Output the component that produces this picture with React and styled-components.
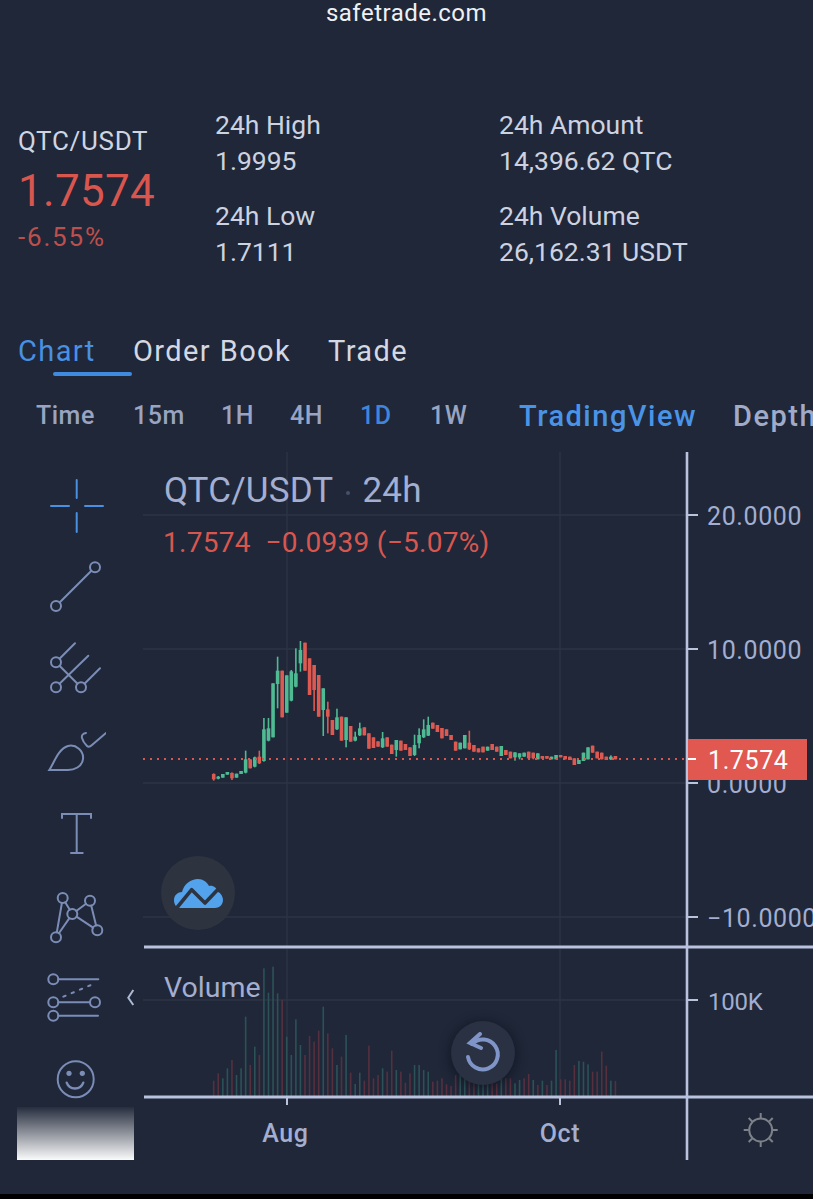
import React from "react"
import styled, { createGlobalStyle } from "styled-components"

const GlobalStyle = createGlobalStyle`
	html, body {
		margin: 0;
		padding: 0;
		background: #1f2738;
	}
	body {
		font-family: Roboto, "Liberation Sans", sans-serif;
	}
`

const Page = styled.div`
	width: 813px;
	height: 1199px;
	background: #1f2738;
	overflow: hidden;
	display: flex;
	flex-direction: column;
`

const TopBar = styled.div`
	height: 30px;
	flex: none;
	padding-bottom: 4px;
	box-sizing: border-box;
	display: flex;
	align-items: center;
	justify-content: center;
	color: #eef0f4;
	font-size: 24px;
	letter-spacing: 0.5px;
`

const Header = styled.div`
	height: 300px;
	flex: none;
	box-sizing: border-box;
	padding: 77px 0 0 18px;
	display: grid;
	grid-template-columns: 197px 284px 1fr;
`

const Pair = styled.div`
	padding-top: 18px;
	display: flex;
	flex-direction: column;
`

const PairName = styled.div`
	font-size: 26px;
	line-height: 32px;
	letter-spacing: 0.7px;
	color: #d0d5e1;
`

const LastPrice = styled.div`
	font-size: 44px;
	line-height: 50px;
	letter-spacing: 0.3px;
	margin-top: 9px;
	color: #d9564f;
`

const Change = styled.div`
	font-size: 26px;
	line-height: 32px;
	letter-spacing: 1.8px;
	margin-top: 5px;
	color: #bd4f4c;
`

const StatColumn = styled.div`
	display: flex;
	flex-direction: column;
	gap: 19px;
`

const Stat = styled.div`
	font-size: 26.5px;
	line-height: 36px;
	color: #ccd2e0;
	white-space: nowrap;
`

const Tabs = styled.div`
	height: 42px;
	flex: none;
	display: flex;
	align-items: center;
	padding-left: 18px;
`

const Tab = styled.div`
	width: ${(p) => p.$w}px;
	flex: none;
	font-size: 29px;
	letter-spacing: 1.4px;
	color: ${(p) => (p.$active ? "#4a90e2" : "#d3d8e3")};
	white-space: nowrap;
`

const TabLine = styled.div`
	width: 79px;
	height: 4px;
	flex: none;
	margin-left: 53px;
	background: #3f8be0;
	border-radius: 2px;
`

const Periods = styled.div`
	height: 76px;
	flex: none;
	box-sizing: border-box;
	padding: 3px 0 0 36px;
	display: flex;
	align-items: center;
	white-space: nowrap;
`

const Period = styled.div`
	width: ${(p) => p.$w}px;
	flex: none;
	font-size: 25px;
	font-weight: 500;
	letter-spacing: 0.5px;
	color: ${(p) => (p.$active ? "#3f86d8" : "#99a4c2")};
`

const ViewTab = styled.div`
	width: ${(p) => p.$w}px;
	flex: none;
	font-size: 29px;
	font-weight: 500;
	letter-spacing: 1.5px;
	color: ${(p) => (p.$active ? "#4a94e8" : "#a0abc9")};
`

const Workspace = styled.div`
	height: 708px;
	flex: none;
	display: flex;
`

const Toolbar = styled.div`
	position: relative;
	width: 143px;
	flex: none;
	box-sizing: border-box;
	padding-top: 12px;
	display: flex;
	flex-direction: column;
`

const ToolSlot = styled.div`
	height: 82px;
	flex: none;
	padding-left: 46px;
	display: flex;
	align-items: center;
`

const ToolIcon = styled.svg`
	width: 60px;
	height: 60px;
	fill: none;
	stroke: ${(p) => (p.$active ? "#4a90e2" : "#7b8db6")};
	stroke-width: 2;
	stroke-linecap: round;
`

const Collapse = styled.svg`
	position: absolute;
	left: 126px;
	top: 537px;
	width: 10px;
	height: 18px;
	fill: none;
	stroke: #aeb9d6;
	stroke-width: 2;
`

const Fade = styled.div`
	position: absolute;
	left: 17px;
	top: 655px;
	width: 117px;
	height: 53px;
	background: linear-gradient(to bottom, rgba(255, 255, 255, 0.03), rgba(255, 255, 255, 0.98));
`

const ChartPane = styled.div`
	position: relative;
	width: 670px;
	flex: none;
`

const ChartSvg = styled.svg`
	display: block;
	width: 670px;
	height: 708px;
`

const AxisText = styled.text`
	font-family: Roboto, "Liberation Sans", sans-serif;
	font-size: ${(p) => p.$size || 25}px;
	font-weight: ${(p) => p.$weight || 400};
	fill: ${(p) => p.$fill || "#a3aed0"};
	letter-spacing: ${(p) => p.$spacing || 0.6}px;
`

const Legend = styled.div`
	position: absolute;
	left: 21px;
	top: 19px;
	display: flex;
	align-items: center;
	font-size: 35px;
	line-height: 40px;
	letter-spacing: 0.2px;
	color: #a3aed0;
	white-space: nowrap;
`

const LegendDot = styled.span`
	width: 4px;
	height: 4px;
	margin: 4px 12px 0 13px;
	border-radius: 50%;
	background: #465069;
`

const LegendValues = styled.div`
	position: absolute;
	left: 20px;
	top: 75px;
	font-size: 28px;
	line-height: 32px;
	letter-spacing: 0.3px;
	color: #d9564f;
	white-space: pre;
`

const VolumeLabel = styled.div`
	position: absolute;
	left: 21px;
	top: 519px;
	font-size: 28.5px;
	line-height: 34px;
	color: #a3aed0;
`

const RoundButton = styled.div`
	position: absolute;
	left: ${(p) => p.$x}px;
	top: ${(p) => p.$y}px;
	width: ${(p) => p.$size}px;
	height: ${(p) => p.$size}px;
	border-radius: 50%;
	background: ${(p) => p.$bg};
	box-shadow: ${(p) => p.$shadow || "none"};
	display: flex;
	align-items: center;
	justify-content: center;
`

const BottomStrip = styled.div`
	flex: 1;
	margin-top: 34px;
	background: #000;
`

const GREEN = "#4fbb93"
const RED = "#dc5a52"

// [bodyTop, bodyBottom, wickTop, wickBottom, up], read off the 3x crops
const FIRST = [
	[432, 448, 430, 452, 0], [440, 446, 438, 448, 1], [432, 443, 432, 443, 1], [426, 434, 426, 434, 1],
	[429, 445, 427, 450, 0], [431, 443, 431, 443, 1], [423, 432, 423, 432, 1], [388, 428, 362, 430, 1],
	[388, 415, 388, 415, 0], [382, 410, 380, 412, 1], [380, 400, 362, 402, 0], [298, 393, 264, 395, 1],
	[295, 332, 264, 334, 1], [160, 322, 160, 322, 1], [122, 162, 80, 235, 1], [122, 262, 122, 262, 0],
	[136, 248, 136, 248, 1], [124, 212, 120, 214, 1], [130, 170, 55, 172, 1], [60, 100, 33, 125, 1],
	[38, 122, 38, 122, 0], [85, 195, 85, 195, 0], [105, 180, 105, 243, 0], [135, 260, 135, 260, 0],
	[175, 240, 175, 318, 1], [238, 260, 215, 310, 0], [270, 315, 270, 315, 0], [262, 298, 236, 300, 1],
	[260, 332, 260, 332, 0], [262, 330, 262, 352, 1], [288, 335, 288, 335, 0], [320, 332, 305, 334, 1],
	[295, 316, 278, 318, 1], [292, 316, 292, 316, 0], [310, 356, 310, 356, 0], [322, 354, 322, 354, 0],
	[334, 350, 334, 350, 0], [325, 352, 306, 354, 1], [322, 350, 322, 350, 0], [344, 372, 344, 372, 0],
	[330, 360, 330, 380, 1], [332, 362, 332, 362, 0], [342, 360, 342, 360, 0], [352, 378, 352, 378, 0],
	[345, 375, 314, 378, 1], [315, 340, 295, 355, 1], [298, 322, 268, 324, 1], [285, 317, 260, 318, 1],
	[278, 296, 278, 296, 0], [285, 306, 285, 306, 0], [294, 325, 294, 325, 0],
]

const SECOND = [
	[88, 108, 88, 108, 0], [105, 120, 105, 120, 0], [125, 152, 125, 152, 0], [128, 148, 128, 148, 1],
	[105, 145, 105, 145, 1], [128, 148, 92, 150, 0], [135, 155, 135, 155, 0], [145, 157, 145, 157, 0],
	[140, 157, 140, 157, 0], [140, 152, 140, 152, 1], [132, 150, 132, 150, 0], [140, 155, 140, 155, 0],
	[138, 168, 138, 168, 1], [150, 165, 150, 165, 0], [155, 175, 155, 175, 0], [157, 172, 157, 182, 1],
	[160, 172, 160, 178, 1], [158, 170, 158, 170, 1], [155, 175, 155, 178, 0], [158, 175, 158, 178, 0],
	[160, 178, 160, 178, 1], [168, 176, 168, 176, 0], [168, 176, 168, 176, 0], [170, 178, 170, 178, 1],
	[165, 178, 165, 178, 1], [165, 172, 165, 172, 0], [168, 178, 168, 178, 0], [170, 180, 170, 180, 0],
	[175, 195, 175, 195, 0], [180, 192, 180, 192, 1], [158, 183, 158, 183, 1], [142, 178, 142, 178, 1],
	[137, 158, 137, 158, 0], [155, 175, 155, 175, 0], [158, 178, 158, 178, 0], [170, 180, 170, 180, 0],
	[170, 178, 166, 180, 1], [168, 178, 168, 178, 0],
]

const toY = (list, offset) => list.map((c) => [...c.slice(0, 4).map((v) => v / 3 + offset), c[4]])
const CANDLES = [...toY(FIRST, 630), ...toY(SECOND, 700)]

// bar tops in the volume crop, green when the sign is positive
const VOLUMES = [
	-392, -370, 385, 355, -330, 375, 355, 200, -345, 290, -315, 55, 128, 50, 130, -150, 260, 315, 208, 285, -315, -258,
	-275, -242, 170, -250, -295, 345, -320, 255, -368, 402, 368, -392, -287, -385, -375, 355, -365, -302, 360, -365,
	-398, -370, 345, 345, 360, 365, -395, -392, -385, -403, -408, -375, 375, 365, -375, -385, 395, 400, 395, -375, -400,
	325, -385, -385, 400, 390, -385, -372, 390, -405, 392, -405, 392, 300, -388, -388, -392, -345, 333, 335, 343, -365,
	-365, -305, -347, 392, -393,
]

const candleX = (i) => 213.7 + i * 4.565

const Crosshair = () => (
	<ToolIcon $active viewBox="0 0 60 60">
		<path d="M30.7 5V23M30.7 38V57M5 31H23M39 31H57" />
	</ToolIcon>
)

const TrendLine = () => (
	<ToolIcon viewBox="0 0 60 60">
		<circle cx="49" cy="10.3" r="5" />
		<circle cx="10" cy="49" r="5" />
		<path d="M13.6 45.5L45.4 13.8" />
	</ToolIcon>
)

const Pitchfork = () => (
	<ToolIcon viewBox="0 0 60 60">
		<circle cx="10" cy="23.3" r="5" />
		<circle cx="10" cy="48.3" r="5" />
		<circle cx="35" cy="48.3" r="5" />
		<path d="M13.5 19.8L29 4.3M13.5 44.8L42.3 16.7M38.5 44.8L54 29.3M13.5 26.8L31.5 44.8" />
	</ToolIcon>
)

const Brush = () => (
	<ToolIcon viewBox="0 0 60 60">
		<path d="M3.3 49C8 42 12 28 22 25C30 23 38 30 37 38C36 46 28 49 22 49Z" />
		<path d="M40 12Q35 13 36 17Q37 21 41 25Q43 27 46 24L60 12" />
	</ToolIcon>
)

const TextTool = () => (
	<ToolIcon viewBox="0 0 60 60">
		<path d="M16 15V11H45V15M30.7 11V50M25 50H36.7" />
	</ToolIcon>
)

const Nodes = () => (
	<ToolIcon viewBox="0 0 60 60">
		<circle cx="16.7" cy="13" r="5" />
		<circle cx="44" cy="15.7" r="5" />
		<circle cx="26.3" cy="29" r="5" />
		<circle cx="51.3" cy="45.3" r="5" />
		<circle cx="10" cy="52.3" r="5" />
		<path d="M15.9 18L10.8 47.3M19.2 17.3L23.8 24.7M45.2 20.6L50.1 40.4M40 18.7L30.3 26M30.5 31.7L47.1 42.6M23.4 33.1L12.9 48.2" />
	</ToolIcon>
)

const Levels = () => (
	<ToolIcon viewBox="0 0 60 60">
		<circle cx="7.3" cy="12.3" r="5" />
		<circle cx="7.3" cy="35.3" r="5" />
		<circle cx="49" cy="35.3" r="5" />
		<circle cx="7.3" cy="48.7" r="5" />
		<path d="M12.3 12.3H52.3M12.3 35.3H44M12.3 48.7H52" />
		<path d="M17.3 29.7L49 16.3" strokeDasharray="2.5 6.5" />
	</ToolIcon>
)

const Smiley = () => (
	<ToolIcon viewBox="0 0 60 60">
		<circle cx="29.7" cy="30.3" r="18" />
		<circle cx="23" cy="24.3" r="2.6" fill="#7b8db6" stroke="none" />
		<circle cx="36.3" cy="24.3" r="2.6" fill="#7b8db6" stroke="none" />
		<path d="M20.7 33.7C22 37.5 25.5 39.5 29 39.5C32.5 39.5 36 37.5 37.3 33.7" strokeWidth="2.4" />
	</ToolIcon>
)

const TOOLS = [Crosshair, TrendLine, Pitchfork, Brush, TextTool, Nodes, Levels, Smiley]

const SunRays = () => {
	const rays = []
	for (let i = 0; i < 8; i++) {
		const a = (i * Math.PI) / 4
		rays.push(
			<line
				key={i}
				x1={760.7 + Math.cos(a) * 12}
				y1={1130 + Math.sin(a) * 12}
				x2={760.7 + Math.cos(a) * 17}
				y2={1130 + Math.sin(a) * 17}
			/>
		)
	}
	return (
		<g fill="none" stroke="#7d8189" strokeWidth="2">
			<circle cx="760.7" cy="1130" r="11.5" />
			{rays}
		</g>
	)
}

const Chart = () => (
	<ChartSvg viewBox="143 452 670 708">
		{/* grid */}
		<g stroke="#2c3446" strokeWidth="1.4">
			{[515, 649, 783, 917].map((y) => (
				<line key={y} x1="143" x2="687" y1={y} y2={y} />
			))}
			<line x1="143" x2="687" y1="1000" y2="1000" />
			<line x1="287" x2="287" y1="452" y2="946" />
			<line x1="560" x2="560" y1="452" y2="946" />
			<line x1="287" x2="287" y1="949" y2="1096" />
			<line x1="560" x2="560" y1="949" y2="1096" />
		</g>

		{/* candles */}
		{CANDLES.map(([top, bottom, wickTop, wickBottom, up], i) => {
			const x = candleX(i)
			const color = up ? GREEN : RED
			return (
				<g key={i} fill={color}>
					<rect x={x - 0.8} y={wickTop} width="1.6" height={wickBottom - wickTop} />
					<rect x={x - 1.8} y={top} width="3.6" height={Math.max(bottom - top, 2)} />
				</g>
			)
		})}

		{/* last price line */}
		<line x1="143" x2="687" y1="759" y2="759" stroke="#d9564f" strokeWidth="2" strokeDasharray="2 5" />

		{/* volume */}
		{VOLUMES.map((v, i) => {
			const top = Math.abs(v) / 3 + 950
			return (
				<rect
					key={i}
					x={candleX(i) - 0.8}
					y={top}
					width="1.6"
					height={1096 - top}
					fill={v > 0 ? "#2c5257" : "#56303f"}
				/>
			)
		})}

		{/* axes */}
		<g stroke="#b9c3de" fill="none">
			<line x1="687" x2="687" y1="452" y2="1160" strokeWidth="2.6" />
			<line x1="144" x2="813" y1="947" y2="947" strokeWidth="3" />
			<line x1="144" x2="813" y1="1097" y2="1097" strokeWidth="3" />
			<g strokeWidth="2">
				<line x1="688" x2="698" y1="515" y2="515" />
				<line x1="688" x2="698" y1="649" y2="649" />
				<line x1="688" x2="698" y1="783" y2="783" />
				<line x1="688" x2="698" y1="917" y2="917" />
				<line x1="688" x2="698" y1="1000" y2="1000" />
				<line x1="287" x2="287" y1="1098" y2="1105" />
				<line x1="560" x2="560" y1="1098" y2="1105" />
			</g>
		</g>

		<AxisText x="707" y="525">20.0000</AxisText>
		<AxisText x="707" y="659">10.0000</AxisText>
		<AxisText x="707" y="793">0.0000</AxisText>
		<AxisText x="707" y="927">−10.0000</AxisText>
		<AxisText x="708" y="1010" $size="24" $spacing="-0.2">100K</AxisText>
		<AxisText x="285.5" y="1142" textAnchor="middle" $size="25" $weight="500">Aug</AxisText>
		<AxisText x="560" y="1142" textAnchor="middle" $size="25" $weight="500">Oct</AxisText>

		{/* price tag */}
		<rect x="688" y="739" width="119" height="41" fill="#e0584f" />
		<line x1="688" x2="696" y1="759" y2="759" stroke="#fff" strokeWidth="2" />
		<AxisText x="708" y="769" $fill="#fff" $size="25">1.7574</AxisText>

		<SunRays />
	</ChartSvg>
)

export default function App() {
	return (
		<Page>
			<GlobalStyle />
			<TopBar>safetrade.com</TopBar>

			<Header>
				<Pair>
					<PairName>QTC/USDT</PairName>
					<LastPrice>1.7574</LastPrice>
					<Change>-6.55%</Change>
				</Pair>
				<StatColumn>
					<Stat>24h High<br />1.9995</Stat>
					<Stat>24h Low<br />1.7111</Stat>
				</StatColumn>
				<StatColumn>
					<Stat>24h Amount<br />14,396.62 QTC</Stat>
					<Stat>24h Volume<br />26,162.31 USDT</Stat>
				</StatColumn>
			</Header>

			<Tabs>
				<Tab $w={115} $active>Chart</Tab>
				<Tab $w={195}>Order Book</Tab>
				<Tab $w={100}>Trade</Tab>
			</Tabs>
			<TabLine />

			<Periods>
				<Period $w={97}>Time</Period>
				<Period $w={88}>15m</Period>
				<Period $w={69}>1H</Period>
				<Period $w={70}>4H</Period>
				<Period $w={70} $active>1D</Period>
				<Period $w={89}>1W</Period>
				<ViewTab $w={214} $active>TradingView</ViewTab>
				<ViewTab $w={90}>Depth</ViewTab>
			</Periods>

			<Workspace>
				<Toolbar>
					{TOOLS.map((Tool, i) => (
						<ToolSlot key={i}><Tool /></ToolSlot>
					))}
					<Collapse viewBox="0 0 10 18">
						<path d="M7.3 1L2.3 8.7L7.3 16" />
					</Collapse>
					<Fade />
				</Toolbar>

				<ChartPane>
					<Chart />
					<Legend>QTC/USDT<LegendDot />24h</Legend>
					<LegendValues>1.7574  −0.0939 (−5.07%)</LegendValues>
					<VolumeLabel>Volume</VolumeLabel>

					<RoundButton $x={18} $y={404} $size={74} $bg="#2e3340">
						<svg width="49" height="29" viewBox="0 0 49 29">
							<path
								d="M6 29C2 29 0 25 0 21C0 16 4 13 8 13C10 5 17 0 24 0C29 0 33 3 35 7C39 6 43 9 44 13C47 14 49 18 49 21C49 26 45 29 41 29Z"
								fill="#52a2ec"
							/>
							<path d="M2.7 29L17.7 10.7L31 24L44.3 10" fill="none" stroke="#2e3340" strokeWidth="3.6" strokeLinejoin="round" />
						</svg>
					</RoundButton>

					<RoundButton $x={308} $y={569} $size={64} $bg="#2a3142" $shadow="0 2px 12px rgba(10, 14, 24, 0.7)">
						<svg width="40" height="42" viewBox="0 0 40 42" fill="none" stroke="#8095c7" strokeWidth="4" strokeLinecap="round">
							<path d="M9 12A15 15 0 1 1 5 25" />
							<path d="M17 2L7 11L18 16" />
						</svg>
					</RoundButton>
				</ChartPane>
			</Workspace>

			<BottomStrip />
		</Page>
	)
}
